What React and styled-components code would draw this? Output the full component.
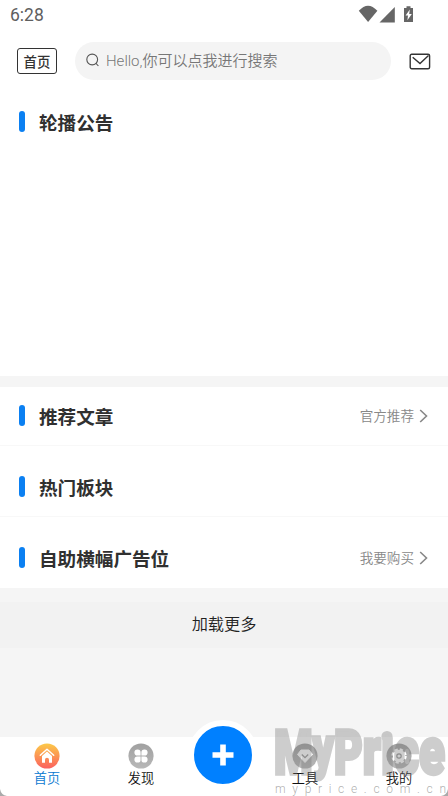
import React from "react";
import styled, { createGlobalStyle } from "styled-components";

const Global = createGlobalStyle`
  * { box-sizing: border-box; }
  body { margin: 0; background: #f5f5f5; font-family: Roboto, "Noto Sans CJK SC", sans-serif; color: #333; }
`;
const Screen = styled.div`
  position: relative; width: 448px; height: 796px; overflow: hidden;
  display: flex; flex-direction: column; background: #f5f5f5;
`;
const StatusBar = styled.div`
  height: 30px; flex: none; background: #fff; display: flex; justify-content: space-between;
  padding: 0 34px 0 10px; line-height: 31px; font-size: 17.5px; color: #5f5f5f;
`;
const StatusIcons = styled.svg`width: 56px; height: 30px; display: block;`;
const Header = styled.header`
  height: 62px; flex: none; background: #fff; display: flex; align-items: center; padding: 0 17px;
`;
const HomeTag = styled.div`
  width: 40px; height: 26px; border: 1.5px solid #333; border-radius: 3px; flex: none;
  display: flex; align-items: center; justify-content: center; font-size: 13.4px; font-weight: 500;
  padding-bottom: 1px;
`;
const SearchBox = styled.div`
  width: 316px; height: 38px; margin-left: 18px; border-radius: 19px; background: #f4f4f4; flex: none;
  display: flex; align-items: center; padding: 0 0 2px 11px; gap: 7px; color: #777; font-size: 15px; font-weight: 350;
`;
const Placeholder = styled.span`padding-bottom: 1px;`;
const MailIcon = styled.svg`width: 22px; height: 17px; margin-left: 18px; flex: none;`;
const Section = styled.section`
  height: ${(p) => p.$height}px; flex: none; background: #fff; padding: ${(p) => p.$top}px 20px 0 19px;
  border-bottom: ${(p) => (p.$line ? "1px solid #f8f8f8" : "0")};
`;
const SectionHead = styled.div`height: 22px; display: flex; align-items: center;`;
const Marker = styled.i`
  width: 6px; height: 21px; border-radius: 3px; background: #0b80f2; margin: 0 14px 2px 0;
`;
const Title = styled.h2`
  margin: 0; padding-top: 4px; font-size: 18.6px; line-height: 22px; font-weight: 700; color: #303030;
`;
const More = styled.div`
  margin-left: auto; display: flex; align-items: center; gap: 5px; font-size: 13.6px; line-height: 20px;
  font-weight: 350; color: #888;
`;
const Gap = styled.div`height: ${(p) => p.$height}px; flex: none;`;
const LoadMore = styled.div`
  height: 46px; flex: none; background: #f2f2f2; text-align: center; line-height: 46px; font-size: 16.2px;
  font-weight: 350; color: #222;
`;
const TabBar = styled.nav`
  margin-top: auto; height: 59px; flex: none; background: #fff; position: relative;
  display: grid; grid-template-columns: 94px 94px 70px 94px 94px;
`;
const Tab = styled.div`
  display: flex; flex-direction: column; align-items: center; padding-top: 6px;
  font-size: 13.2px; line-height: 18px; font-weight: 350; color: ${(p) => (p.$active ? "#0878d0" : "#111")};
`;
const TabIcon = styled.svg`width: 26px; height: 26px; display: block; margin-bottom: 1px;`;
const AddButton = styled.div`
  position: absolute; left: 188px; top: -17px; width: 70px; height: 70px; border-radius: 50%;
  background: #0080ff; border: 6px solid #fff; display: flex; align-items: center; justify-content: center;
  padding-bottom: 1px;
`;
const Watermark = styled.svg`position: absolute; left: 268px; top: 716px; width: 180px; height: 80px;`;
const Corners = styled.svg`position: absolute; left: 0; bottom: 0; width: 448px; height: 12px;`;

const Head = ({ title, more }) => (
  <SectionHead>
    <Marker />
    <Title>{title}</Title>
    {more && (
      <More>
        {more}
        <svg width="9" height="14" viewBox="0 0 9 14" fill="none" stroke="#888" strokeWidth="1.6"><path d="M1.2 1 7.5 7 1.2 13" /></svg>
      </More>
    )}
  </SectionHead>
);

const GreyDisc = ({ children }) => (
  <TabIcon viewBox="0 0 26 26">
    <defs>
      <linearGradient id="grey" x1="0" y1="0" x2="0" y2="1"><stop stopColor="#a0a0a0" /><stop offset="1" stopColor="#b8b8b8" /></linearGradient>
    </defs>
    <circle cx="13" cy="13" r="12.6" fill="url(#grey)" />
    {children}
  </TabIcon>
);

export default function App() {
  return (
    <Screen>
      <Global />
      <StatusBar>
        <span>6:28</span>
        <StatusIcons viewBox="0 0 56 30" fill="#666">
          <path d="M.8 10Q10-1 19.4 10L10.1 22Z" transform="translate(0 1.5) scale(1 .93)" />
          <path d="M21.5 22.4 36.8 7V22.4Z" />
          <path d="M46 8h2.5V6.3h4V8H55V22H46Z" />
          <path d="m51.8 9.5-4.2 6h2.4l-.6 4.8 4.4-6.2h-2.6Z" fill="#fff" />
        </StatusIcons>
      </StatusBar>
      <Header>
        <HomeTag>首页</HomeTag>
        <SearchBox>
          <svg width="13" height="14" viewBox="0 0 13 14" fill="none" stroke="#555" strokeWidth="1.1"><circle cx="6.2" cy="6.5" r="5.4" /><path d="m10 10.4 2.4 2.6" /></svg>
          <Placeholder>Hello,你可以点我进行搜索</Placeholder>
        </SearchBox>
        <MailIcon viewBox="0 0 22 17" fill="none" stroke="#333" strokeWidth="1.4"><rect x="1.2" y="1.2" width="19.4" height="14.6" rx="1.5" /><path d="M3.7 4.2 11 10.5 19.5 2.5" /></MailIcon>
      </Header>
      <Section $height={284} $top={19}><Head title="轮播公告" /></Section>
      <Gap $height={11} />
      <Section $height={59} $top={18} $line><Head title="推荐文章" more="官方推荐" /></Section>
      <Section $height={71} $top={30} $line><Head title="热门板块" /></Section>
      <Section $height={71} $top={30}><Head title="自助横幅广告位" more="我要购买" /></Section>
      <Gap $height={14} />
      <LoadMore>加载更多</LoadMore>
      <TabBar>
        <Tab $active>
          <TabIcon viewBox="0 0 26 26">
            <defs><linearGradient id="warm" x1="0" y1="0" x2="0" y2="1"><stop stopColor="#fcca48" /><stop offset="1" stopColor="#fb605f" /></linearGradient></defs>
            <circle cx="13" cy="13" r="12.6" fill="url(#warm)" />
            <path d="m6.3 12.2 6.7-6 6.7 6" fill="none" stroke="#fff" strokeWidth="1.5" strokeLinecap="round" strokeLinejoin="round" />
            <path d="m8 13 5-4.5 5 4.5v6.7h-3v-3a2 2 0 0 0-4 0v3H8Z" fill="#fff" />
          </TabIcon>
          首页
        </Tab>
        <Tab>
          <GreyDisc><path fill="#fff" d="M12.6 12.6H9.6a3.1 3.1 0 1 1 3-3ZM13.4 12.6V9.6a3.1 3.1 0 1 1 3 3ZM12.6 13.4v3a3.1 3.1 0 1 1-3-3ZM13.4 13.4h3a3.1 3.1 0 1 1-3 3Z" /></GreyDisc>
          发现
        </Tab>
        <span />
        <Tab>
          <GreyDisc><path d="M9 7h8l3.5 4.5L13 19.5 5.5 11.5Z" fill="#fff" stroke="#fff" strokeLinejoin="round" /><path d="m9.8 11.5 3.2 3.2 3.2-3.2" fill="none" stroke="#999" strokeWidth="1.3" /></GreyDisc>
          工具
        </Tab>
        <Tab>
          <GreyDisc>
            <circle cx="13" cy="13" r="6.2" fill="#fff" />
            <circle cx="13" cy="13" r="6.5" fill="none" stroke="#fff" strokeWidth="2.4" strokeDasharray="3.1 2.005" />
            <circle cx="13" cy="13" r="2.2" fill="none" stroke="#999" strokeWidth="1.2" />
          </GreyDisc>
          我的
        </Tab>
        <AddButton>
          <svg width="22" height="22" viewBox="0 0 22 22" stroke="#fff" strokeWidth="5.6"><path d="M11 .5v21M.5 11h21" /></svg>
        </AddButton>
      </TabBar>
      <Corners viewBox="0 0 448 12" fill="#aaa"><path d="M0 5Q1 11 7 12H0ZM448 5Q447 11 441 12H448Z" /></Corners>
      <Watermark viewBox="0 0 180 80" fontFamily="Roboto" aria-hidden="true">
        <g opacity=".36" fill="#777" stroke="#777" strokeWidth="3.6">
          <text x="6" y="58" fontSize="62" fontWeight="900" textLength="171" lengthAdjust="spacingAndGlyphs">M<tspan fontSize="58" dy="-7">y</tspan><tspan dy="7">P</tspan><tspan fontSize="67">rıce</tspan></text>
          <circle cx="119" cy="20.5" r="3.8" />
        </g>
        <text x="7" y="77" fontSize="12" fontWeight="300" fill="#777" fillOpacity=".6" textLength="171">myprice.com.cn</text>
      </Watermark>
    </Screen>
  );
}
